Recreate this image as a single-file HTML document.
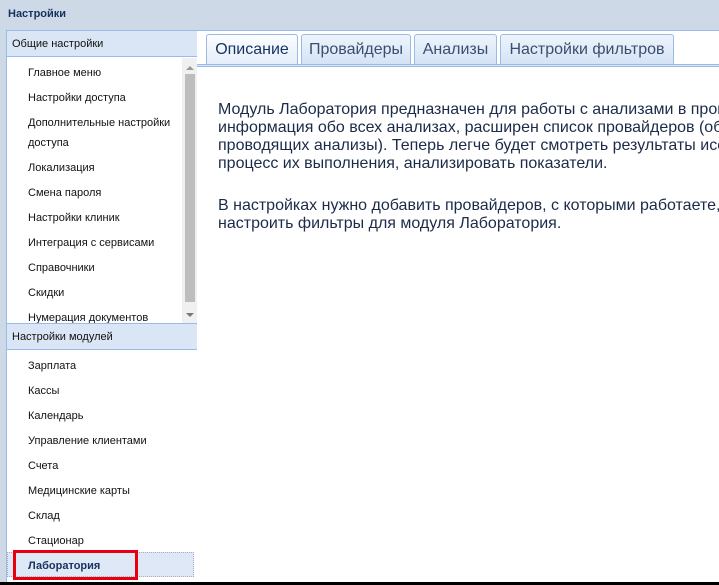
<!DOCTYPE html>
<html><head><meta charset="utf-8"><style>
*{margin:0;padding:0;box-sizing:border-box}
html,body{width:719px;height:585px;overflow:hidden}
body{background:#cdd9e6;font-family:"Liberation Sans",sans-serif;position:relative}
.a{position:absolute}
.title{left:8px;top:8px;font-size:11px;font-weight:bold;color:#15335f}
.left{left:6px;top:30px;width:192px;height:553px;background:#fff;border-left:1px solid #99bbe8;border-right:1px solid #99bbe8}
.hdr{position:absolute;left:0;width:190px;height:27px;background:#dae6f5;border-top:1px solid #99bbe8;border-bottom:1px solid #99bbe8;font-size:11px;color:#111;padding:7px 0 0 5px}
.it{position:absolute;left:21px;font-size:11px;color:#111;white-space:nowrap}
.right{left:197px;top:30px;width:522px;height:553px;background:#fff;border-top:1px solid #99bbe8;overflow:hidden}
.tab{position:absolute;top:3px;height:30px;border:1px solid #99bbe8;border-bottom:none;border-radius:3px 3px 0 0;background:linear-gradient(#eef4fc,#d5e3f6);font-size:16px;color:#3a4f6e;padding:6px 0 0 0;text-align:center}
.txt{left:21px;font-size:16px;color:#1b2b48;line-height:18px;white-space:nowrap}
</style></head><body>
<div class="a title">Настройки</div>
<div class="a left">
 <div class="hdr" style="top:0">Общие настройки</div>
 <div class="it" style="top:37px">Главное меню</div>
 <div class="it" style="top:62px">Настройки доступа</div>
 <div class="it" style="top:87px">Дополнительные настройки</div>
 <div class="it" style="top:107px">доступа</div>
 <div class="it" style="top:132px">Локализация</div>
 <div class="it" style="top:157px">Смена пароля</div>
 <div class="it" style="top:182px">Настройки клиник</div>
 <div class="it" style="top:207px">Интеграция с сервисами</div>
 <div class="it" style="top:232px">Справочники</div>
 <div class="it" style="top:257px">Скидки</div>
 <div class="it" style="top:282px">Нумерация документов</div>
 <div class="a" style="left:175px;top:28px;width:15px;height:265px;background:#f0f0f0"></div>
 <div class="a" style="left:178px;top:44px;width:10px;height:228px;background:#bdbdbd"></div>
 <div class="a" style="left:179px;top:36px;width:0;height:0;border-left:4px solid transparent;border-right:4px solid transparent;border-bottom:4px solid #999"></div>
 <div class="a" style="left:179px;top:283px;width:0;height:0;border-left:4px solid transparent;border-right:4px solid transparent;border-top:4px solid #777"></div>
 <div class="hdr" style="top:293px">Настройки модулей</div>
 <div class="it" style="top:330px">Зарплата</div>
 <div class="it" style="top:355px">Кассы</div>
 <div class="it" style="top:380px">Календарь</div>
 <div class="it" style="top:405px">Управление клиентами</div>
 <div class="it" style="top:430px">Счета</div>
 <div class="it" style="top:455px">Медицинские карты</div>
 <div class="it" style="top:480px">Склад</div>
 <div class="it" style="top:505px">Стационар</div>
 <div class="a" style="left:0;top:522px;width:187px;height:25px;background:#dfe8f6;border:1px dotted #aab"></div>
 <div class="a" style="left:6px;top:520px;width:125px;height:30px;border:3px solid #e8000f"></div>
 <div class="it" style="top:530px;font-weight:bold;color:#15335f">Лаборатория</div>
</div>
<div class="a right">
 <div class="tab" style="left:9px;width:92px;background:linear-gradient(#fbfdff,#e5eefa);color:#15335f">Описание</div>
 <div class="tab" style="left:104px;width:110px">Провайдеры</div>
 <div class="tab" style="left:217px;width:83px">Анализы</div>
 <div class="tab" style="left:303px;width:174px">Настройки фильтров</div>
 <div class="a" style="left:0;top:33px;width:522px;height:3px;background:#dae6f5;border-top:1px solid #99bbe8;border-bottom:1px solid #99bbe8"></div>
 <div class="a txt" style="top:70px">Модуль Лаборатория предназначен для работы с анализами в программе<br>информация обо всех анализах, расширен список провайдеров (обо<br>проводящих анализы). Теперь легче будет смотреть результаты иссл<br>процесс их выполнения, анализировать показатели.</div>
 <div class="a txt" style="top:166px">В настройках нужно добавить провайдеров, с которыми работаете, и<br>настроить фильтры для модуля Лаборатория.</div>
</div>
<div class="a" style="left:0;top:582px;width:719px;height:3px;background:#000"></div>
</body></html>
